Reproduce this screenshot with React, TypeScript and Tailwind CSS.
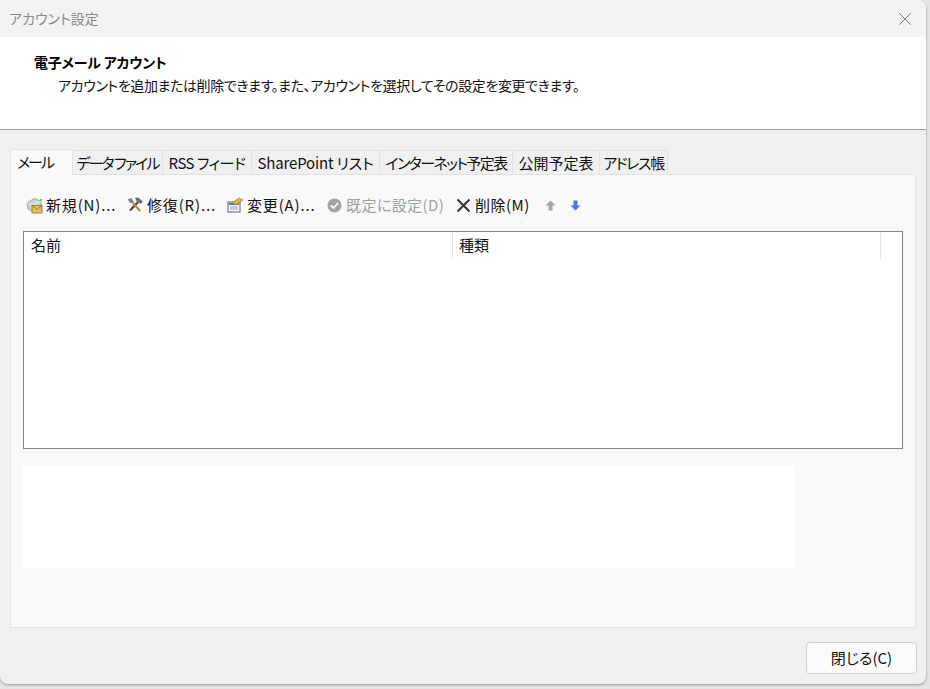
import { X } from 'lucide-react'

const font = { fontFamily: '"Noto Sans CJK JP", "Noto Sans", sans-serif' }

const tabs = [
  { label: 'データ ファイル', w: 'w-[90px] tracking-[-1.9px]' },
  { label: 'RSS フィード', w: 'w-[89px] tracking-[-0.5px]' },
  { label: 'SharePoint リスト', w: 'w-[128px] tracking-[-0.15px]' },
  { label: 'インターネット予定表', w: 'w-[133px] tracking-[-1.6px]' },
  { label: '公開予定表', w: 'w-[87px]' },
  { label: 'アドレス帳', w: 'w-[68px] tracking-[-1.4px]' },
]

function NewIcon() {
  return (
    <svg width="17" height="17" viewBox="0 0 17 17">
      <path d="M1 6 L8 1.5 L15 4 L15 9 L6 14 L2 12 Z" fill="#c9d3da" stroke="#8d9aa3" strokeWidth="0.8" />
      <path d="M1 6 L7 8 L15 4" fill="none" stroke="#eef2f4" strokeWidth="0.8" />
      <rect x="6" y="8.5" width="10" height="7.5" fill="#e8c15a" stroke="#8a6d22" strokeWidth="0.8" />
      <path d="M6 8.5 L11 12.5 L16 8.5" fill="none" stroke="#8a6d22" strokeWidth="0.8" />
      <rect x="14" y="2" width="2" height="2" fill="#5fd05f" />
    </svg>
  )
}

function RepairIcon() {
  return (
    <svg width="17" height="16" viewBox="0 0 17 16">
      <path d="M3 13.5 L11 5" stroke="#4a4a4a" strokeWidth="2.2" />
      <path d="M8 1 L11 0.5 L16 4.5 L13.5 7 L9.5 4 Z" fill="#6b6b6b" />
      <path d="M13 14 L6 6" stroke="#a58a52" strokeWidth="2" />
      <path d="M1 2 L4 1 L6 3 L7 6 L4 6 L2 5 Z" fill="#7b8890" />
    </svg>
  )
}

function ChangeIcon() {
  return (
    <svg width="17" height="16" viewBox="0 0 17 16">
      <rect x="1" y="5" width="12" height="10" fill="#f4f6f8" stroke="#5c6670" strokeWidth="1" />
      <rect x="2" y="6" width="10" height="2" fill="#4f7fb0" />
      <path d="M3 10 H11 M3 12 H11" stroke="#9aa5ae" strokeWidth="1" />
      <path d="M5 6 L12 1 L16 3 L9 8 Z" fill="#d9b64c" stroke="#8a6d22" strokeWidth="0.6" />
    </svg>
  )
}

function CheckIcon() {
  return (
    <svg width="15" height="15" viewBox="0 0 15 15">
      <circle cx="7.5" cy="7.5" r="7" fill="#a3a3a3" />
      <path d="M4 7.5 L6.5 10 L11 5" fill="none" stroke="#f9f9f9" strokeWidth="1.8" />
    </svg>
  )
}

function DeleteIcon() {
  return (
    <svg width="15" height="15" viewBox="0 0 15 15">
      <path d="M1.5 1.5 L13.5 13.5 M13.5 1.5 L1.5 13.5" stroke="#333" strokeWidth="2" />
    </svg>
  )
}

function Arrow({ up, color }: { up?: boolean; color: string }) {
  return (
    <svg width="11" height="11" viewBox="0 0 10 11">
      <path d={up ? 'M5 0.5 L10 5.5 L7 5.5 L7 10.5 L3 10.5 L3 5.5 L0 5.5 Z' : 'M3 0.5 L7 0.5 L7 5.5 L10 5.5 L5 10.5 L0 5.5 L3 5.5 Z'} fill={color} />
    </svg>
  )
}

export default function App() {
  return (
    <div className="w-[930px] h-[689px] bg-[#e6e6e6] pr-[4px] pb-[5px] overflow-hidden [font-feature-settings:'palt']" style={font}>
      <div className="h-full flex flex-col bg-[#f0f0f0] rounded-b-lg rounded-tr-lg shadow-[0_1px_3px_rgba(0,0,0,0.35)] overflow-hidden">
        {/* Title bar */}
        <div className="h-[37px] shrink-0 bg-[#f3f3f3] flex items-center justify-between pl-[9px] pr-[10px]">
          <span className="text-[14px] text-[#8a8a8a]">アカウント設定</span>
          <X size={22} strokeWidth={1} className="text-[#707070]" />
        </div>

        {/* Header */}
        <div className="h-[93px] shrink-0 bg-white border-b border-[#a0a0a0] pl-[34px] pt-[15px]">
          <div className="text-[14px] leading-[20px] font-bold text-black tracking-[-0.2px]">電子メール アカウント</div>
          <div className="text-[14px] leading-[20px] text-[#111] ml-[24px] mt-[3px] tracking-[-0.4px]">
            アカウントを追加または削除できます。また、アカウントを選択してその設定を変更できます。
          </div>
        </div>

        {/* Tabs */}
        <div className="flex flex-col flex-1 pl-[10px] pr-[10px] pt-[18px]">
          <div className="flex items-end h-[26px] relative z-10">
            <div className="w-[63px] h-[26px] -mb-px bg-[#f9f9f9] border border-b-0 border-[#e4e4e4] text-[15px] leading-[24px] pl-[6px] text-[#111] tracking-[-2px]">
              メール
            </div>
            {tabs.map((t) => (
              <div
                key={t.label}
                className={`${t.w} h-[24px] bg-[#f0f0f0] border-t border-r border-[#e2e2e2] text-[15px] leading-[23px] text-center whitespace-nowrap text-[#111]`}
              >
                {t.label}
              </div>
            ))}
          </div>

          <div className="h-[454px] bg-[#f9f9f9] border border-[#e2e2e2] pl-[12px] pr-[12px] flex flex-col">
            {/* Toolbar */}
            <div className="h-[56px] shrink-0 flex items-center pl-[3px] pt-[4px] text-[15px] text-[#111]">
              <button className="flex items-center gap-[3px] w-[101px] tracking-[0.85px]"><NewIcon />新規(N)...</button>
              <button className="flex items-center gap-[3px] w-[100px] tracking-[0.85px]"><RepairIcon />修復(R)...</button>
              <button className="flex items-center gap-[3px] w-[100px] tracking-[0.85px]"><ChangeIcon />変更(A)...</button>
              <button className="flex items-center gap-[4px] w-[129px] text-[#a0a0a0] tracking-[0.4px]"><CheckIcon />既定に設定(D)</button>
              <button className="flex items-center gap-[4px] w-[89px] tracking-[0.5px]"><DeleteIcon />削除(M)</button>
              <span className="w-[25px] flex"><Arrow up color="#a6a6a6" /></span>
              <Arrow color="#4a7bd8" />
            </div>

            {/* Account list */}
            <div className="h-[218px] shrink-0 bg-white border border-[#82868c]">
              <div className="flex h-[27px] text-[15px] leading-[25px] text-[#111]">
                <div className="w-[429px] pl-[7px] border-r border-[#e5e5e5]">名前</div>
                <div className="w-[428px] pl-[6px] border-r border-[#e5e5e5]">種類</div>
              </div>
            </div>

            {/* Detail area */}
            <div className="w-[772px] h-[102px] mt-[17px] bg-white" />
          </div>

          {/* Footer */}
          <div className="flex justify-end mt-[14px] -mr-[1px]">
            <button className="w-[111px] h-[32px] bg-[#fbfbfb] border border-[#d0d0d0] rounded-[4px] text-[15px] text-[#111]">
              閉じる(C)
            </button>
          </div>
        </div>
      </div>
    </div>
  )
}
